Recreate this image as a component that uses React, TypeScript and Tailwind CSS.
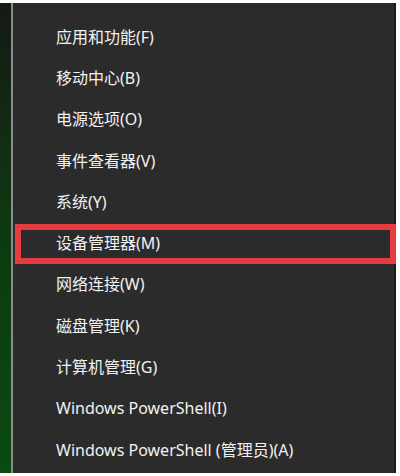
import React from "react";

const items = [
  "应用和功能(F)",
  "移动中心(B)",
  "电源选项(O)",
  "事件查看器(V)",
  "系统(Y)",
  "设备管理器(M)",
  "网络连接(W)",
  "磁盘管理(K)",
  "计算机管理(G)",
  "Windows PowerShell(I)",
  "Windows PowerShell (管理员)(A)",
];

export default function App() {
  return (
    <div className="w-[400px] h-[476px] bg-white pt-[3px] pb-[3px] overflow-hidden">
      <div className="flex h-full">
        {/* desktop edge */}
        <div className="w-[11px] h-full bg-gradient-to-b from-[#141a14] via-[#0c3a10] to-[#0b4a12]" />
        <div className="w-[2px] h-full bg-[#8c8c8c]" />
        {/* menu */}
        <div
          className="flex-1 h-full bg-[#2b2b2b] border-r-2 border-[#1c1c1c] pt-[13px] text-[16px] text-[#f2f2f2]"
          style={{ fontFamily: '"Noto Sans", "Noto Sans CJK SC", sans-serif' }}
        >
          {items.map((label, i) => (
            <div key={label} className="relative h-[41.3px] flex items-center pl-[43px]">
              {label}
              {i === 5 && (
                <div className="absolute left-[2px] -right-[2px] top-[2px] bottom-0 border-[6px] border-[#e63b40]" />
              )}
            </div>
          ))}
        </div>
        <div className="w-[4px]" />
      </div>
    </div>
  );
}
